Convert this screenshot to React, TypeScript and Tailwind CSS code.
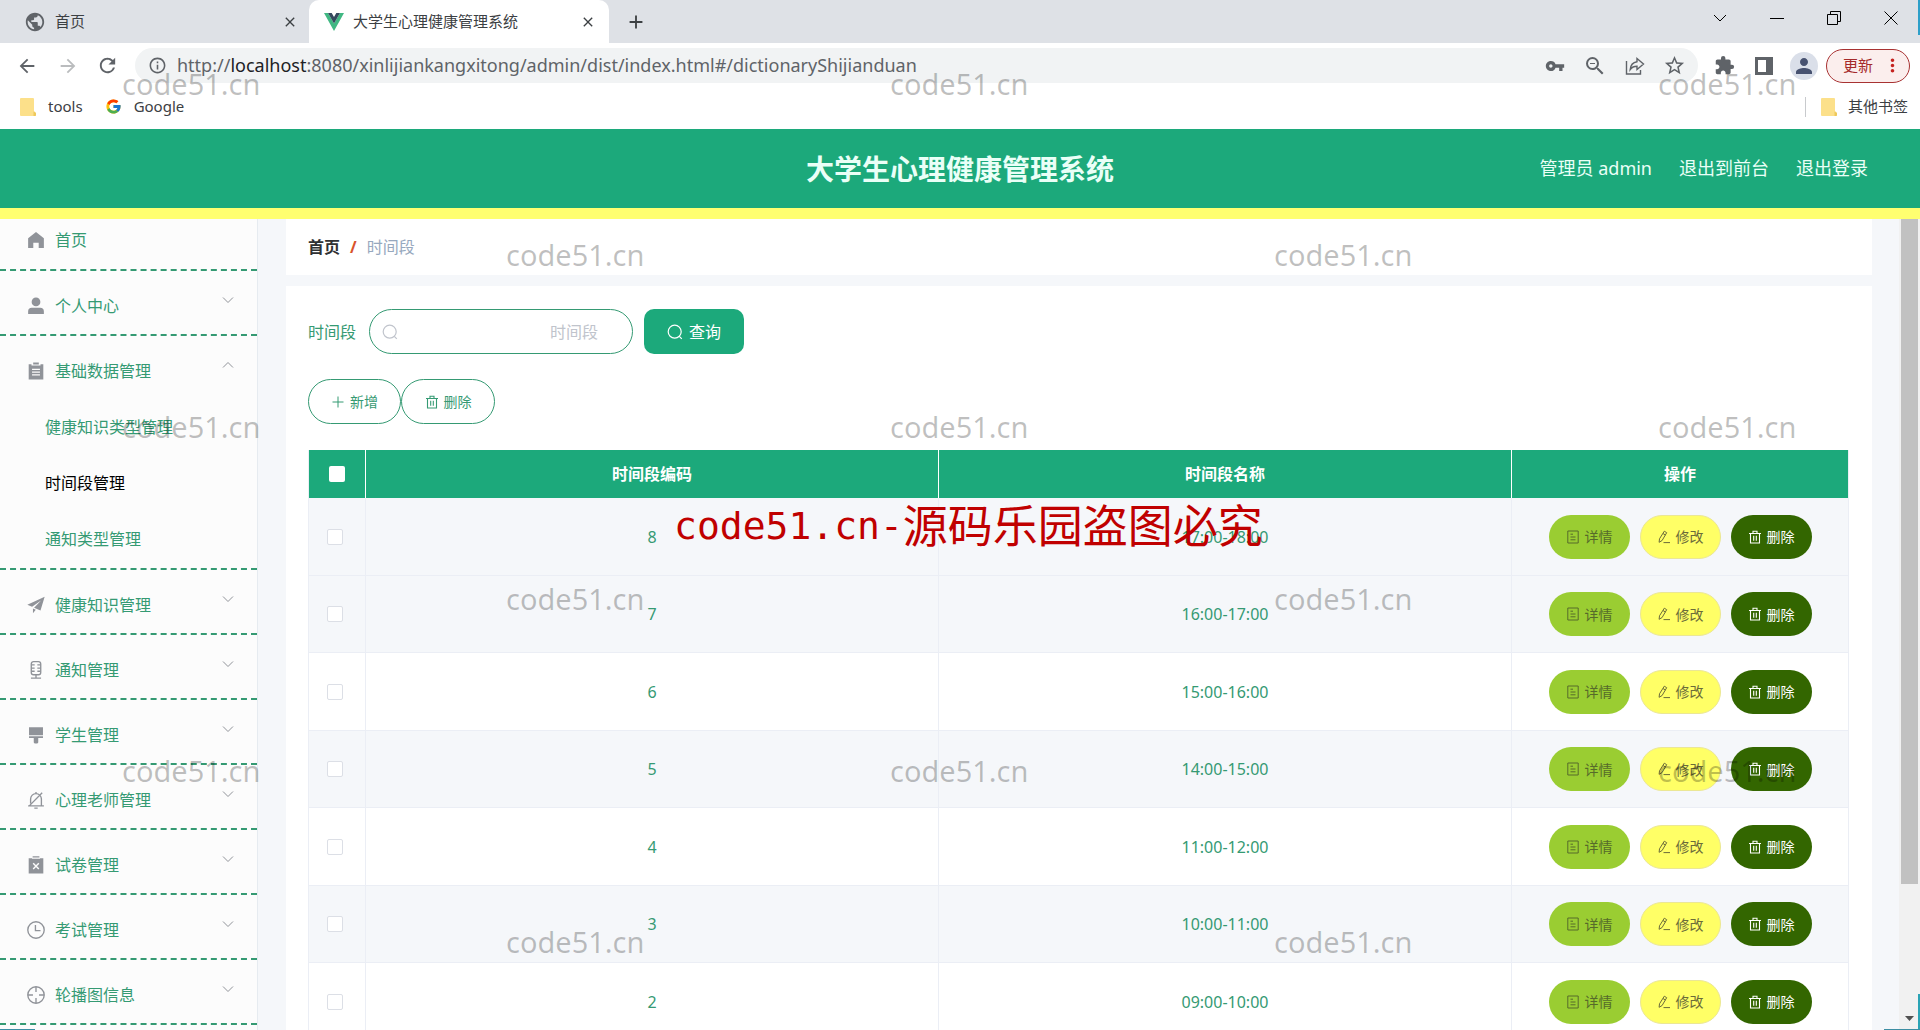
import type { ReactNode } from 'react';
import {
  MdAdd,
  MdArrowBack,
  MdArrowForward,
  MdClose,
  MdExtension,
  MdInfoOutline,
  MdMoreVert,
  MdPerson,
  MdPublic,
  MdRefresh,
  MdStarBorder,
  MdVpnKey,
  MdZoomOut,
} from 'react-icons/md';
import { FcGoogle } from 'react-icons/fc';

// ── Sidebar icons (16px grid) ──
const icons: Record<string, ReactNode> = {
  home: <path fill="currentColor" d="M8 .8 15 6.4V15h-4.6v-4.6H5.6V15H1V6.4z" />,
  user: (
    <g fill="currentColor">
      <circle cx="8" cy="4.4" r="3.9" />
      <path d="M1 15v-2.2A3.3 3.3 0 0 1 4.3 9.500h7.400A3.300 3.300 0 0 1 15 12.800V15z" />
    </g>
  ),
  order: (
    <g>
      <path fill="currentColor" d="M1.500 2H4v1.200h8V2h2.500v13.500h-13zM5.500.5h5v1.800h-5z" />
      <path stroke="#fcfcfc" strokeWidth="1.200" d="M4.500 6.500h7M4.500 9h7M4.500 11.500h7" />
    </g>
  ),
  plane: (
    <path fill="currentColor" d="M15.700.6.3 7.700l4.200 1.900L12.500 4 6.300 10.400l5.700 2.400zM5.300 11.200v4.200l2.500-3.100z" />
  ),
  mic: (
    <g fill="none" stroke="currentColor" strokeWidth="1.200">
      <rect x="3.800" y=".6" width="8.400" height="11.600" rx="2" />
      <path d="M4 3.500h2.800M9.200 3.500H12M4 6.300h2.800M9.200 6.300H12M4 9.100h2.800M9.200 9.100H12M8 12v3M3.500 15.200h9" />
    </g>
  ),
  brush: <path fill="currentColor" d="M1.800 1h12.400v7.200H1.800zM1.800 9.200h12.400v1.500H10v3.800a1 1 0 0 1-1 1H7a1 1 0 0 1-1-1v-3.800H1.800z" />,
  bellOff: (
    <g fill="none" stroke="currentColor" strokeWidth="1.200">
      <path d="M1 13.200h14M3.200 11V7A4.800 4.800 0 0 1 8 2.300 4.800 4.800 0 0 1 12.800 7v6M8 2.300V.8M6.500 15.200h3M2 13.200 13.500 1.500" />
    </g>
  ),
  paper: (
    <g>
      <path fill="currentColor" d="M1.500 2h13v13.500h-13zM5 .3h6V2.600H5z" />
      <path stroke="#fcfcfc" strokeWidth="1.300" d="M4.500 1.900h7M5.500 6.500l5 5M10.500 6.500l-5 5" />
    </g>
  ),
  time: (
    <g fill="none" stroke="currentColor" strokeWidth="1.200">
      <circle cx="8" cy="8" r="7.300" />
      <path d="M7.500 3.500V8.500h4.500" />
    </g>
  ),
  aim: (
    <g fill="none" stroke="currentColor" strokeWidth="1.200">
      <circle cx="8" cy="8" r="7.300" />
      <path d="M8 .8v4.500M8 10.700v4.500M.8 8h4.500M10.700 8h4.500" />
    </g>
  ),
};

interface MenuItem {
  label: string;
  icon: string;
  children?: string[];
}

const menu: MenuItem[] = [
  { label: '个人中心', icon: 'user' },
  { label: '基础数据管理', icon: 'order', children: ['健康知识类型管理', '时间段管理', '通知类型管理'] },
  { label: '健康知识管理', icon: 'plane' },
  { label: '通知管理', icon: 'mic' },
  { label: '学生管理', icon: 'brush' },
  { label: '心理老师管理', icon: 'bellOff' },
  { label: '试卷管理', icon: 'paper' },
  { label: '考试管理', icon: 'time' },
  { label: '轮播图信息', icon: 'aim' },
];

const rows = [
  { code: 8, name: '17:00-18:00', shaded: true },
  { code: 7, name: '16:00-17:00', shaded: true },
  { code: 6, name: '15:00-16:00', shaded: false },
  { code: 5, name: '14:00-15:00', shaded: true },
  { code: 4, name: '11:00-12:00', shaded: false },
  { code: 3, name: '10:00-11:00', shaded: true },
  { code: 2, name: '09:00-10:00', shaded: false },
];

const watermarks = [
  'left-[122px] top-[64px]',
  'left-[890px] top-[64px]',
  'left-[1658px] top-[64px]',
  'left-[506px] top-[235px]',
  'left-[1274px] top-[235px]',
  'left-[122px] top-[407px]',
  'left-[890px] top-[407px]',
  'left-[1658px] top-[407px]',
  'left-[506px] top-[579px]',
  'left-[1274px] top-[579px]',
  'left-[122px] top-[751px]',
  'left-[890px] top-[751px]',
  'left-[1658px] top-[751px]',
  'left-[506px] top-[922px]',
  'left-[1274px] top-[922px]',
];

function MenuIcon({ name }: { name: string }) {
  return (
    <svg viewBox="0 0 16 16" className="w-[18px] h-[18px] text-[#909399] shrink-0">
      {icons[name]}
    </svg>
  );
}

function Arrow({ up }: { up?: boolean }) {
  return (
    <svg viewBox="0 0 12 12" className="w-3 h-3 mb-3 ml-auto text-[#909399]" fill="none" stroke="currentColor">
      <path d={up ? 'M1 8.500 6 3.500l5 5' : 'M1 3.500l5 5 5-5'} />
    </svg>
  );
}

function SearchIcon({ className }: { className: string }) {
  return (
    <svg viewBox="0 0 16 16" className={className} fill="none" stroke="currentColor" strokeWidth="1.200">
      <circle cx="7.700" cy="7.700" r="6.500" />
      <path d="m12.300 12.300 2.500 2.500" />
    </svg>
  );
}

function TrashIcon() {
  return (
    <svg viewBox="0 0 14 14" className="w-[14px] h-[14px]" fill="none" stroke="currentColor" strokeWidth="1.100">
      <path d="M1 3.500h12M2.500 3.500v9.500h9V3.500M5 3.300V1.200h4v2.100M5.700 5.800v4.900M8.300 5.800v4.900" />
    </svg>
  );
}

function DocIcon() {
  return (
    <svg viewBox="0 0 14 14" className="w-[14px] h-[14px]" fill="none" stroke="currentColor">
      <path d="M1.800 1h10.400v12H1.800zM4.500 4.200h2.500M4.500 7h5M4.500 9.800h5" />
    </svg>
  );
}

function PenIcon() {
  return (
    <svg viewBox="0 0 14 14" className="w-[14px] h-[14px]" fill="none" stroke="currentColor">
      <path d="m7.300 1.200 2.400 1.500-4.600 7.800-3 1.800.4-3.500zM6 3.500l2.400 1.500M6.500 12.600H13" />
    </svg>
  );
}

function Folder() {
  return (
    <svg viewBox="0 0 16 18" className="w-4 h-[18px]">
      <path d="M1 0h12a1 1 0 0 1 1 1v12l2 2v2a1 1 0 0 1-1 1H1a1 1 0 0 1-1-1V1a1 1 0 0 1 1-1z" fill="#fce08a" />
      <path d="M13.500 18v-4.500L16 15v2a1 1 0 0 1-1 1z" fill="#eec85a" />
    </svg>
  );
}

function BrowserChrome() {
  return (
    <div className="shrink-0 text-[15px] text-[#3c4043]">
      {/* Tabs */}
      <div className="flex h-[43px] bg-[#dee1e6]">
        <div className="flex items-center w-[309px] pl-6 pr-[11px]">
          <MdPublic size={22} className="text-[#5f6368]" />
          <span className="ml-[9px]">首页</span>
          <button aria-label="关闭" className="ml-auto"><MdClose size={16} /></button>
        </div>
        <div className="flex items-center w-[300px] pl-[15px] pr-[13px] bg-white rounded-t-[10px]">
          <svg viewBox="0 0 20 18" className="w-5 h-[18px]">
            <path d="M0 0h4l6 10.500L16 0h4L10 18z" fill="#41b883" />
            <path d="M4 0h3.700L10 4l2.300-4H16l-6 10.500z" fill="#35495e" />
          </svg>
          <span className="ml-[9px]">大学生心理健康管理系统</span>
          <button aria-label="关闭" className="ml-auto"><MdClose size={16} /></button>
        </div>
        <button aria-label="新标签页" className="ml-4"><MdAdd size={22} /></button>
        <div className="flex items-start gap-[43px] ml-auto mr-[22px] pt-[11px] text-black">
          <button aria-label="搜索标签页">
            <svg viewBox="0 0 14 14" className="w-[14px] h-[14px]" fill="none" stroke="currentColor"><path d="m1 4 6 6 6-6" /></svg>
          </button>
          <button aria-label="最小化">
            <svg viewBox="0 0 14 14" className="w-[14px] h-[14px]" fill="none" stroke="currentColor"><path d="M0 7.500h14" /></svg>
          </button>
          <button aria-label="还原">
            <svg viewBox="0 0 14 14" className="w-[14px] h-[14px]" fill="none" stroke="currentColor"><path d="M.5 3.500h10v10H.5zM3.500 3.500v-3h10v10h-3" /></svg>
          </button>
          <button aria-label="关闭窗口">
            <svg viewBox="0 0 14 14" className="w-[14px] h-[14px]" fill="none" stroke="currentColor"><path d="m.5.5 13 13M13.500.5l-13 13" /></svg>
          </button>
        </div>
      </div>

      {/* Address bar */}
      <div className="flex items-center h-[45px] pl-4 pr-[10px] text-[#5f6368] bg-white">
        <button aria-label="后退"><MdArrowBack size={22} /></button>
        <button aria-label="前进" className="ml-[19px] text-[#babcbe]"><MdArrowForward size={22} /></button>
        <button aria-label="刷新" className="ml-[17px]"><MdRefresh size={23} /></button>
        <div className="flex items-center flex-1 h-[35px] ml-4 pl-[13px] pr-3 rounded-full bg-[#f1f3f4]">
          <MdInfoOutline size={19} />
          <div
            role="textbox"
            aria-label="地址栏"
            contentEditable
            suppressContentEditableWarning
            className="flex-1 ml-[10px] text-[18px] whitespace-nowrap"
          >
            http://<span className="text-[#202124]">localhost</span>:8080/xinlijiankangxitong/admin/dist/index.html#/dictionaryShijianduan
          </div>
          <div className="flex items-center gap-[18px]">
            <button aria-label="密码"><MdVpnKey size={20} /></button>
            <button aria-label="缩放"><MdZoomOut size={24} /></button>
            <button aria-label="分享">
              <svg viewBox="0 0 20 20" className="w-5 h-5" fill="none" stroke="currentColor" strokeWidth="1.400">
                <path d="M1.500 5v13h14v-4M12 2.500 18.500 8 12 13.500v-3.200c-3 0-5.200 1-6.800 3.200.4-4.500 2.800-7.200 6.800-7.800z" />
              </svg>
            </button>
            <button aria-label="收藏"><MdStarBorder size={23} /></button>
          </div>
        </div>
        <button aria-label="扩展程序" className="ml-4"><MdExtension size={21} /></button>
        <button aria-label="侧边栏" className="ml-5">
          <svg viewBox="0 0 18 18" className="w-[18px] h-[18px]"><path fill="currentColor" fillRule="evenodd" d="M0 0h18v18H0zM3 3v12h8V3z" /></svg>
        </button>
        <button aria-label="个人资料" className="flex items-center justify-center w-7 h-7 ml-[17px] rounded-full bg-[#dadfe9] text-[#475270]">
          <MdPerson size={24} />
        </button>
        <button className="flex items-center h-[34px] ml-2 pl-4 pr-[6px] gap-[9px] rounded-full border border-[#a83232] bg-[#fbeeed] text-[#a52a2a]">
          更新
          <MdMoreVert size={21} className="text-[#c5221f]" />
        </button>
      </div>

      {/* Bookmarks */}
      <div className="flex items-center h-[41px] pl-5 pr-3 pb-1 bg-white">
        <Folder />
        <a href="#tools" className="ml-3">tools</a>
        <FcGoogle className="w-[17px] h-[17px] ml-[22px]" />
        <a href="#google" className="ml-3">Google</a>
        <div className="w-px h-5 ml-auto bg-[#c8cacd]" />
        <div className="ml-[15px]"><Folder /></div>
        <a href="#other" className="ml-[11px]">其他书签</a>
      </div>
    </div>
  );
}

function Sidebar() {
  return (
    <nav className="w-[258px] shrink-0 border-r border-[#e6ebf0] bg-[#fcfcfc] text-[16px] text-[#359a73] overflow-hidden">
      <a href="#home" className="flex items-center h-[52px] pl-[27px] pb-2 gap-[10px] border-b-2 border-dashed border-[#359a73]">
        <MenuIcon name="home" />
        首页
      </a>
      {menu.map((item) => (
        <div key={item.label} className="pt-[7px] border-b-2 border-dashed border-[#359a73]">
          <button className="flex items-center w-full h-14 pl-[27px] pr-[23px] gap-[10px]">
            <MenuIcon name={item.icon} />
            {item.label}
            <Arrow up={!!item.children} />
          </button>
          {item.children && (
            <ul className="pb-px">
              {item.children.map((child) => (
                <li key={child}>
                  <a
                    href={`#${child}`}
                    className={`flex items-center h-14 pl-[45px] ${child === '时间段管理' ? 'text-black' : ''}`}
                  >
                    {child}
                  </a>
                </li>
              ))}
            </ul>
          )}
        </div>
      ))}
    </nav>
  );
}

export default function App() {
  return (
    <div className="relative flex flex-col h-screen overflow-hidden bg-[#f5f7fa] font-['Noto_Sans','Noto_Sans_CJK_SC',sans-serif]">
      <BrowserChrome />

      {/* Header */}
      <header className="grid grid-cols-[1fr_auto_1fr] items-center shrink-0 h-[90px] bg-[#1ca97b] border-b-[11px] border-[#ffff70] text-[18px] text-[#eafff7]">
        <h1 className="col-start-2 text-[28px] font-bold">大学生心理健康管理系统</h1>
        <div className="flex justify-end gap-[27px] pr-[52px]">
          <span>管理员 admin</span>
          <a href="#front">退出到前台</a>
          <a href="#logout">退出登录</a>
        </div>
      </header>

      <div className="flex flex-1 min-h-0">
        <Sidebar />

        <main className="flex-1 min-w-0 pl-7 pr-[27px] overflow-hidden text-[16px] text-[#359a73]">
          <div className="flex items-center h-14 px-[22px] bg-white">
            <a href="#home" className="font-bold text-[#303133]">首页</a>
            <span className="mx-[10px] font-bold text-[#d9532c]">/</span>
            <span className="text-[#97a8be]">时间段</span>
          </div>

          <div className="mt-[11px] pl-[22px] pr-[23px] pt-[23px] pb-6 bg-white">
            <form className="flex items-center" onSubmit={(e) => e.preventDefault()}>
              <label htmlFor="slot">时间段</label>
              <div className="flex items-center w-[264px] h-[45px] ml-[13px] pl-3 pr-[34px] border border-[#359a73] rounded-full">
                <SearchIcon className="w-4 h-4 shrink-0 text-[#c0c4cc]" />
                <input
                  id="slot"
                  type="text"
                  placeholder="时间段"
                  className="w-full min-w-0 text-right outline-none placeholder:text-[#c0c4cc]"
                />
              </div>
              <button className="flex items-center justify-center w-[100px] h-[45px] ml-[11px] gap-[6px] rounded-[10px] bg-[#1ca97b] text-white">
                <SearchIcon className="w-4 h-4" />
                查询
              </button>
            </form>

            <div className="flex mt-[25px] text-[14px]">
              <button className="flex items-center justify-center w-[93px] h-[45px] gap-[5px] border border-[#359a73] rounded-full">
                <svg viewBox="0 0 14 14" className="w-[14px] h-[14px]" fill="none" stroke="currentColor"><path d="M7 1.500v11M1.500 7h11" /></svg>
                新增
              </button>
              <button className="flex items-center justify-center w-[94px] h-[45px] gap-[5px] border border-[#359a73] rounded-full">
                <TrashIcon />
                删除
              </button>
            </div>

            <table className="w-full mt-[26px] table-fixed border-separate border-spacing-0 border-l border-[#ebeef5] text-center">
              <colgroup>
                <col className="w-[57px]" />
                <col />
                <col />
                <col className="w-[337px]" />
              </colgroup>
              <thead className="bg-[#1ca97b] text-white">
                <tr className="h-12">
                  <th className="border-r border-white">
                    <input type="checkbox" aria-label="全选" className="block w-4 h-4 mx-auto appearance-none rounded-[2px] bg-white" />
                  </th>
                  <th className="border-r border-white">时间段编码</th>
                  <th className="border-r border-white">时间段名称</th>
                  <th className="border-r border-[#ebeef5]">操作</th>
                </tr>
              </thead>
              <tbody>
                {rows.map((row) => (
                  <tr key={row.code} className={`odd:h-[78px] even:h-[77px] ${row.shaded ? 'bg-[#f5f7fa]' : 'bg-white'}`}>
                    <td className="border-r border-b border-[#ebeef5] pr-[5px]">
                      <input
                        type="checkbox"
                        aria-label={`选择 ${row.code}`}
                        className="block w-4 h-4 mx-auto appearance-none rounded-[2px] border border-[#dcdfe6] bg-white"
                      />
                    </td>
                    <td className="border-r border-b border-[#ebeef5]">{row.code}</td>
                    <td className="border-r border-b border-[#ebeef5]">{row.name}</td>
                    <td className="border-r border-b border-[#ebeef5]">
                      <div className="flex items-center justify-center gap-[10px] text-[14px]">
                        <button className="flex items-center justify-center w-[81px] h-11 gap-[5px] rounded-full bg-[#9acd32] text-[#566b2a]">
                          <DocIcon />
                          详情
                        </button>
                        <button className="flex items-center justify-center w-[81px] h-11 gap-[5px] rounded-full border border-[#ebe795] bg-[#ffff66] text-[#6b6b3a]">
                          <PenIcon />
                          修改
                        </button>
                        <button className="flex items-center justify-center w-[81px] h-11 gap-[5px] rounded-full bg-[#336600] text-white">
                          <TrashIcon />
                          删除
                        </button>
                      </div>
                    </td>
                  </tr>
                ))}
              </tbody>
            </table>
          </div>
        </main>

        {/* Scrollbar */}
        <div className="flex flex-col justify-between w-[21px] shrink-0 pl-[2px] pr-[2px] bg-[#f1f1f1]">
          <div className="h-[82%] bg-[#c1c1c1]" />
          <svg viewBox="0 0 17 17" className="w-[17px] h-[17px] mb-[3px]"><path d="M4 6h9l-4.500 5z" fill="#505050" /></svg>
        </div>
      </div>

      {/* Slivers of the desktop behind the window */}
      <div className="absolute top-0 right-0 w-[2px] h-[35px] bg-[#2d9fc9]" />
      <div className="absolute bottom-0 right-0 w-[2px] h-9 bg-[#2aa3b5]" />
      <div className="absolute bottom-0 right-0 w-9 h-px bg-[#3d8ea3]" />
      <div className="absolute bottom-0 left-0 w-[35px] h-px bg-[#3d8ea3]" />

      {/* Watermarks */}
      <div className="absolute inset-0 overflow-hidden pointer-events-none">
        {watermarks.map((pos) => (
          <span key={pos} className={`absolute text-[29px] leading-10 text-black/25 ${pos}`}>
            code51.cn
          </span>
        ))}
        <p className="absolute left-[674px] top-[496px] flex items-center text-[45px] leading-[60px] text-[#c00000] whitespace-nowrap">
          <span className="font-['DejaVu_Sans_Mono',monospace] text-[38px]">code51.cn-</span>
          源码乐园盗图必究
        </p>
      </div>
    </div>
  );
}
